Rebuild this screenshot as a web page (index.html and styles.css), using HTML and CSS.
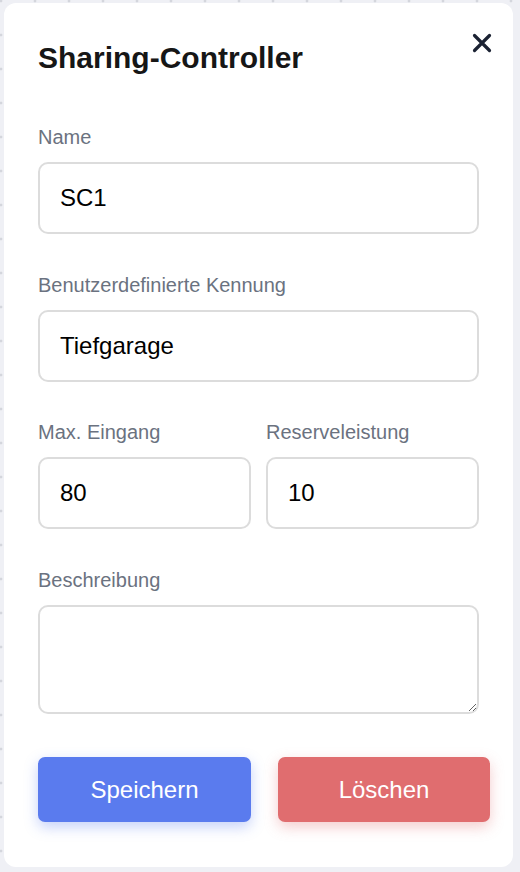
FILE: index.html
```html
<!DOCTYPE html>
<html lang="de">
<head>
<meta charset="utf-8">
<title>Sharing-Controller</title>
<link rel="stylesheet" href="styles.css">
</head>
<body>
<div class="card">
  <button class="close" aria-label="Schließen">
    <svg viewBox="0 0 20 20" width="20" height="20"><path d="M2.5 2.5 L17.5 17.5 M17.5 2.5 L2.5 17.5" stroke="#1b2233" stroke-width="3.2" stroke-linecap="round" fill="none"/></svg>
  </button>
  <h1 class="title">Sharing-Controller</h1>
  <div class="field">
    <label class="label">Name</label>
    <input class="input" type="text" value="SC1">
  </div>
  <div class="field">
    <label class="label">Benutzerdefinierte Kennung</label>
    <input class="input" type="text" value="Tiefgarage">
  </div>
  <div class="row">
    <div class="field">
      <label class="label">Max. Eingang</label>
      <input class="input" type="text" value="80">
    </div>
    <div class="field">
      <label class="label">Reserveleistung</label>
      <input class="input" type="text" value="10">
    </div>
  </div>
  <div class="field field-text">
    <label class="label">Beschreibung</label>
    <textarea class="input textarea"></textarea>
  </div>
  <div class="actions">
    <button class="btn btn-save">Speichern</button>
    <button class="btn btn-delete">Löschen</button>
  </div>
</div>
</body>
</html>
```
FILE: styles.css
```css
* { box-sizing: border-box; }
html, body { margin: 0; padding: 0; }
body {
  width: 520px;
  height: 872px;
  overflow: hidden;
  font-family: "Liberation Sans", Arial, Helvetica, sans-serif;
  background-color: #eff0f5;
  background-image: radial-gradient(circle, #d4d6dd 1.2px, transparent 1.7px);
  background-size: 34px 34px;
  background-position: -16px -16px;
  padding: 3px 0 0 4px;
}
.card {
  position: relative;
  width: 509px;
  height: 864px;
  background: #ffffff;
  border-radius: 12px;
  padding: 37px 34px 0 34px;
}
.close {
  position: absolute;
  top: 30px;
  right: 21px;
  width: 20px;
  height: 20px;
  padding: 0;
  border: 0;
  background: none;
  display: flex;
}
.title {
  margin: 0 0 49px 0;
  font-size: 30px;
  line-height: 36px;
  font-weight: 700;
  color: #161616;
}
.field {
  display: flex;
  flex-direction: column;
  margin-bottom: 38.5px;
}
.row .field { margin-bottom: 0; }
.row {
  display: grid;
  grid-template-columns: 213px 213px;
  column-gap: 15px;
  margin-bottom: 39px;
}
.label {
  font-size: 20px;
  line-height: 24px;
  color: #6b7280;
  margin-bottom: 13px;
}
.input {
  height: 72px;
  width: 100%;
  border: 2px solid #dcdcdc;
  border-radius: 10px;
  padding: 0 20px;
  font-family: "Liberation Sans", Arial, Helvetica, sans-serif;
  font-size: 24px;
  color: #000;
  background: #fff;
  outline: none;
}
.textarea {
  height: 109px;
  padding: 14px 20px;
  resize: vertical;
  display: block;
}
.field-text { margin-bottom: 43px; }
.actions {
  display: grid;
  grid-template-columns: 213px 212px;
  column-gap: 27px;
}
.btn {
  height: 65px;
  border: 0;
  border-radius: 7px;
  font-family: "Liberation Sans", Arial, Helvetica, sans-serif;
  font-size: 24px;
  color: #ffffff;
}
.btn-save {
  background: #5a7bee;
  box-shadow: 0 5px 14px rgba(90, 123, 238, 0.35);
}
.btn-delete {
  background: #e06d6f;
  box-shadow: 0 5px 14px rgba(224, 109, 111, 0.35);
}
```
